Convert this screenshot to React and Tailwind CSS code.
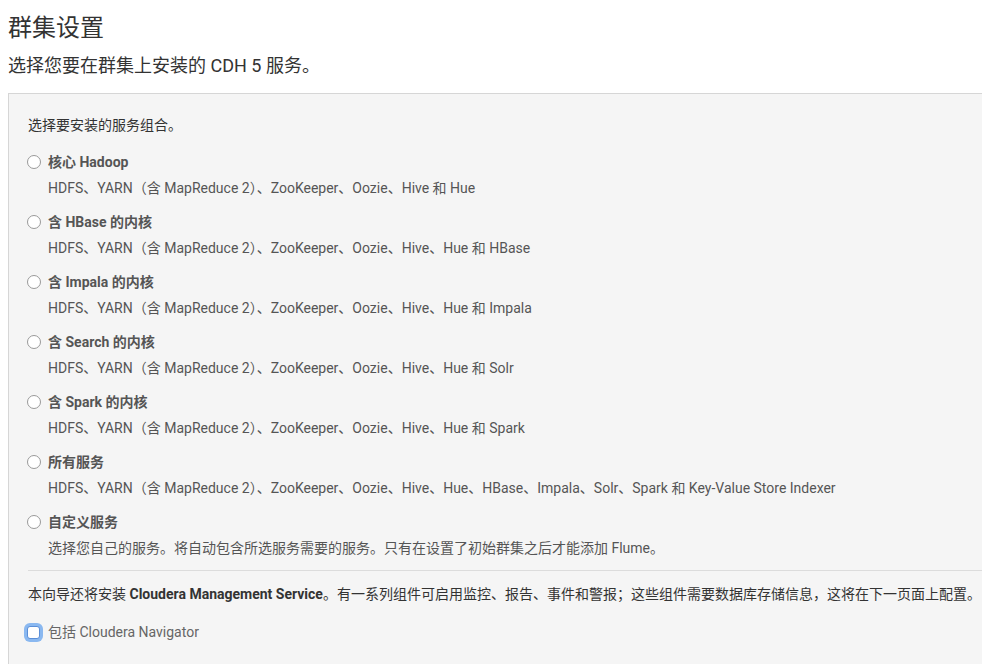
import React from 'react';

const options = [
    { id: 'core', label: '核心 Hadoop', desc: 'HDFS、YARN（含 MapReduce 2）、ZooKeeper、Oozie、Hive 和 Hue' },
    { id: 'hbase', label: '含 HBase 的内核', desc: 'HDFS、YARN（含 MapReduce 2）、ZooKeeper、Oozie、Hive、Hue 和 HBase' },
    { id: 'impala', label: '含 Impala 的内核', desc: 'HDFS、YARN（含 MapReduce 2）、ZooKeeper、Oozie、Hive、Hue 和 Impala' },
    { id: 'search', label: '含 Search 的内核', desc: 'HDFS、YARN（含 MapReduce 2）、ZooKeeper、Oozie、Hive、Hue 和 Solr' },
    { id: 'spark', label: '含 Spark 的内核', desc: 'HDFS、YARN（含 MapReduce 2）、ZooKeeper、Oozie、Hive、Hue 和 Spark' },
    { id: 'all', label: '所有服务', desc: 'HDFS、YARN（含 MapReduce 2）、ZooKeeper、Oozie、Hive、Hue、HBase、Impala、Solr、Spark 和 Key-Value Store Indexer' },
    { id: 'custom', label: '自定义服务', desc: '选择您自己的服务。将自动包含所选服务需要的服务。只有在设置了初始群集之后才能添加 Flume。' },
];

const ServiceOption = ({ option }) => {
    return (
        <div className="pb-[14px]">
            <label className="flex items-center h-[20px] cursor-pointer">
                <span className="-ml-[1px] w-[14px] h-[14px] rounded-full border border-[#999] bg-white mr-[7px] shrink-0" />
                <span className="text-[14px] font-bold text-[#555]">{option.label}</span>
            </label>
            <div className="mt-[6px] pl-[20px] text-[14px] leading-[20px] text-[#555]">
                {option.desc}
            </div>
        </div>
    );
};

export default function App() {
    return (
        <div
            className="w-[982px] h-[664px] overflow-hidden bg-white text-[#333]"
            style={{ fontFamily: 'Roboto, "Noto Sans CJK SC", sans-serif' }}
        >
            <div className="pl-[8px]">
                <h1 className="pt-[11px] text-[24px] leading-[34px] text-[#333]">群集设置</h1>
                <p className="mt-[8px] text-[18px] leading-[26px] text-[#333]">选择您要在群集上安装的 CDH 5 服务。</p>
            </div>

            {/* Service selection panel */}
            <div className="ml-[8px] mt-[14px] border-l border-t border-[#d6d6d6] bg-[#f5f5f5] pl-[19px] pt-[21px] pb-[30px]">
                <div className="text-[14px] leading-[20px] text-[#333]">选择要安装的服务组合。</div>

                <div className="mt-[17px]">
                    {options.map((option) => (
                        <ServiceOption key={option.id} option={option} />
                    ))}
                </div>

                <div className="-mt-[2px] border-t border-[#dcdcdc]" />

                <div className="mt-[13px] text-[14px] leading-[20px] text-[#333] whitespace-nowrap">
                    本向导还将安装 <span className="font-bold">Cloudera Management Service</span>。有一系列组件可启用监控、报告、事件和警报；这些组件需要数据库存储信息，这将在下一页面上配置。
                </div>

                <label className="mt-[18px] flex items-center h-[20px]">
                    <span className="-ml-[1px] w-[13px] h-[13px] rounded-[3px] border border-[#5b8fd8] bg-white ring-[3px] ring-[#8ab8f0] mr-[8px] shrink-0" />
                    <span className="text-[14px] text-[#666]">包括 Cloudera Navigator</span>
                </label>
            </div>
        </div>
    );
}
